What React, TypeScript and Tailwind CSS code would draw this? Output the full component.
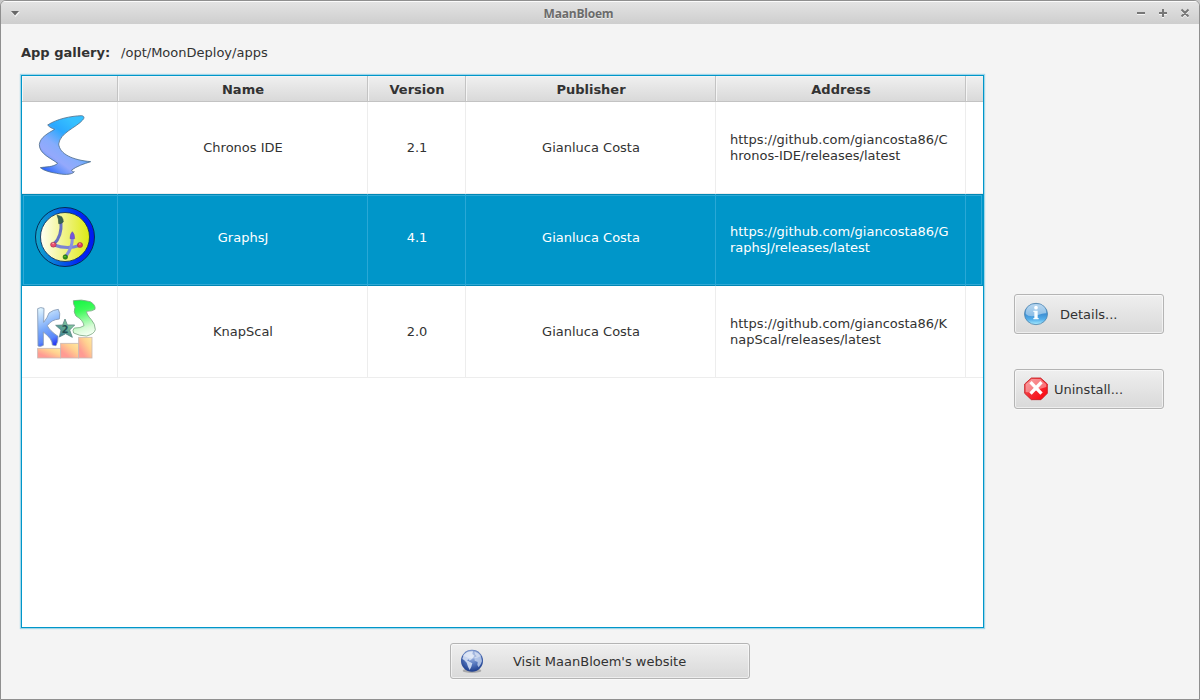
import type { ReactNode } from "react";

const BODY = "font-['DejaVu_Sans',sans-serif] text-[13px] leading-4 text-[#323232]";

function ChronosIcon() {
  return (
    <svg className="h-[92px] w-[95px]" viewBox="-6 -6 285 276">
      <defs>
        <linearGradient id="chronos" gradientUnits="userSpaceOnUse" x1="175" y1="75" x2="70" y2="215">
          <stop offset="0" stopColor="#35c0ff" />
          <stop offset="0.25" stopColor="#2ba8ff" />
          <stop offset="0.5" stopColor="#86acfc" />
          <stop offset="0.68" stopColor="#94a9fc" />
          <stop offset="0.8" stopColor="#6894fb" />
          <stop offset="1" stopColor="#1a55ff" />
        </linearGradient>
      </defs>
      <path
        d="M71 63 C98 45 140 36 173 35 C181 36 182 42 176 48 C158 70 108 86 104 120 C107 150 145 168 200 173 C180 179 158 187 143 198 C143 203 148 204 151 203 C143 214 115 212 98 208 C78 205 60 200 49 191 C65 188 88 190 101 178 C82 163 46 150 46 122 C48 100 72 88 92 76 C84 73 77 70 71 63 Z"
        fill="url(#chronos)"
        stroke="#52708d"
        strokeWidth="2.5"
      />
    </svg>
  );
}

function GraphsIcon() {
  return (
    <svg className="h-[92px] w-[95px]" viewBox="12 12 285 276">
      <defs>
        <linearGradient id="ring" x1="0" x2="1">
          <stop offset="0" stopColor="#13a9cb" />
          <stop offset="0.3" stopColor="#087adb" />
          <stop offset="0.72" stopColor="#0028f5" />
          <stop offset="1" stopColor="#0018f0" />
        </linearGradient>
        <linearGradient id="disc" x1="0" x2="1">
          <stop offset="0" stopColor="#fffff6" />
          <stop offset="0.5" stopColor="#f0f385" />
          <stop offset="1" stopColor="#dcea12" />
        </linearGradient>
      </defs>
      <circle cx="141" cy="141" r="88.500" fill="url(#ring)" stroke="#062c56" strokeWidth="3" />
      <circle cx="141" cy="141" r="73.500" fill="url(#disc)" stroke="#102b50" strokeWidth="2.500" />
      <g fill="none" strokeLinecap="round" strokeWidth="9">
        <path d="M129 95 C131 122 125 147 107 163" stroke="#6670c2" />
        <path d="M108 165 C132 174 160 175 186 166" stroke="#7c83d2" />
        <path d="M163 140 C164 164 155 184 143 199" stroke="#8a90dd" />
      </g>
      <path d="M117 75 L131 80 Q137 88 136 96 L128 101 L122 101 Q123 89 117 75Z" fill="#376350" stroke="#2a4a3b" strokeWidth="1.500" />
      <path d="M163 125 Q170 131 170 146 H156 Q156 131 163 125Z" fill="#7654db" stroke="#5a48b9" strokeWidth="1.500" />
      <ellipse cx="106" cy="164" rx="8.500" ry="7.500" fill="#e84d6d" stroke="#8c3048" strokeWidth="1.500" />
      <ellipse cx="186" cy="165" rx="8" ry="7.500" fill="#e23b5f" stroke="#8c3048" strokeWidth="1.500" />
      <path d="M103 161h5M183 162h5" stroke="#ffb4bd" strokeWidth="3" />
      <circle cx="142" cy="201" r="7" fill="#2b8e10" stroke="#1f5a18" strokeWidth="1.500" />
      <path d="M139 200h4" stroke="#78d751" strokeWidth="3" />
    </svg>
  );
}

function KnapIcon() {
  return (
    <svg className="h-[92px] w-[95px]" viewBox="-6 0 285 276">
      <defs>
        <linearGradient id="letterK" gradientUnits="userSpaceOnUse" x1="48" y1="68" x2="98" y2="178">
          <stop offset="0" stopColor="#dff5ff" />
          <stop offset="0.5" stopColor="#7aaaf9" />
          <stop offset="0.78" stopColor="#5a87fa" />
          <stop offset="1" stopColor="#1a24f4" />
        </linearGradient>
        <linearGradient id="letterS" x1="0.3" y1="0" x2="0.5" y2="1">
          <stop offset="0" stopColor="#18f545" />
          <stop offset="0.3" stopColor="#3cfa58" />
          <stop offset="0.8" stopColor="#d8fbd7" />
          <stop offset="1" stopColor="#f3fff1" />
        </linearGradient>
        <linearGradient id="star" x1="0" y1="1" x2="1" y2="0">
          <stop offset="0" stopColor="#2f729c" />
          <stop offset="0.5" stopColor="#62aa93" />
          <stop offset="1" stopColor="#a8ebac" />
        </linearGradient>
        <linearGradient id="step" x1="0" y1="1" x2="1" y2="0">
          <stop offset="0.25" stopColor="#ff9b93" />
          <stop offset="0.65" stopColor="#ffd190" />
          <stop offset="1" stopColor="#ffeaa0" />
        </linearGradient>
      </defs>
      <g fill="url(#step)" stroke="#c9b9b4" strokeWidth="2.500">
        <rect x="41" y="187" width="69" height="29" />
        <rect x="110" y="172" width="54" height="44" />
        <rect x="164" y="154" width="40" height="62" />
      </g>
      <path
        d="M41 68 Q50 62 60 67 L59 109 Q70 96 75 81 Q88 71 103 70 Q110 82 106 99 Q82 101 70 119 Q76 133 102 151 Q103 167 96 179 Q87 178 85 177 Q86 159 58 138 L58 178 Q50 183 42 180 Z"
        fill="url(#letterK)"
        stroke="#8497b2"
        strokeWidth="2.500"
      />
      <path
        d="M148 44 Q171 39 199 47 Q216 57 213 70 Q204 76 188 76 Q187 85 202 101 Q214 114 214 131 Q211 144 188 150 Q166 150 149 141 Q144 132 151 126 Q170 127 180 119 Q178 103 156 90 Q147 78 153 64 Q147 53 148 44Z"
        fill="url(#letterS)"
        stroke="#7ea886"
        strokeWidth="2.500"
      />
      <path
        d="M123 99 L130 117 L152 117 L137 132 L145 154 L125 143 L106 153 L111 132 L95 118 L116 117Z"
        fill="url(#star)"
        stroke="#5c8583"
        strokeWidth="2.500"
      />
      <text x="123" y="140" textAnchor="middle" className="font-['DejaVu_Sans',sans-serif] text-[29px] font-bold" fill="#245055">
        2
      </text>
    </svg>
  );
}

function InfoIcon() {
  return (
    <svg className="size-6 shrink-0" viewBox="0 0 72 72">
      <defs>
        <linearGradient id="info" x1="0" y1="0" x2="0" y2="1">
          <stop offset="0" stopColor="#5e9cd2" />
          <stop offset="0.5" stopColor="#3d8fd4" />
          <stop offset="0.75" stopColor="#54aeea" />
          <stop offset="1" stopColor="#a9edff" />
        </linearGradient>
        <linearGradient id="infoShine" x1="0" y1="0" x2="0" y2="1">
          <stop offset="0" stopColor="#b9d7ef" />
          <stop offset="1" stopColor="#8abde6" />
        </linearGradient>
      </defs>
      <ellipse cx="36" cy="36" rx="34.500" ry="32" fill="url(#info)" stroke="#5286ad" strokeWidth="2.500" />
      <path d="M5 36 C5 16 17 6 36 6 S67 16 67 34 C51 33 40 42 24 43 Q11 43 5 36Z" fill="url(#infoShine)" />
      <circle cx="36" cy="17" r="5.500" fill="#fff" />
      <path d="M28 26h13v22h3v4H28v-4h3V30h-3z" fill="#f8fdff" />
    </svg>
  );
}

function StopIcon() {
  return (
    <svg className="size-6 shrink-0" viewBox="0 0 72 72">
      <defs>
        <linearGradient id="stop" x1="0" y1="0" x2="1" y2="1">
          <stop offset="0" stopColor="#f46a6a" />
          <stop offset="0.5" stopColor="#f32c34" />
          <stop offset="1" stopColor="#ff0009" />
        </linearGradient>
      </defs>
      <path d="M22 3H50L70 21V49L51 68H22L2 49V21Z" fill="url(#stop)" stroke="#c31a21" strokeWidth="2.500" />
      <path d="M23 6H49L67 22V30Q48 34 34 42Q19 48 5 45V22Z" fill="#fff" opacity="0.38" />
      <path d="M23 19L49 46M49 19L23 46" stroke="#fff" strokeWidth="10" strokeLinecap="square" />
    </svg>
  );
}

function GlobeIcon() {
  return (
    <svg className="size-6 shrink-0" viewBox="0 0 72 72">
      <defs>
        <radialGradient id="globe" cx="0.5" cy="0.35" r="0.65">
          <stop offset="0" stopColor="#9eb5e3" />
          <stop offset="0.5" stopColor="#5476bd" />
          <stop offset="1" stopColor="#1d3d8c" />
        </radialGradient>
      </defs>
      <ellipse cx="36" cy="65" rx="28" ry="7" fill="#8d8d91" opacity="0.65" />
      <circle cx="36" cy="35" r="33" fill="url(#globe)" />
      <path d="M11 17Q22 6 39 7L37 15L43 20L36 30L29 35L26 31L21 34L30 39L37 43L34 53L29 63L24 53L20 41L13 34L7 30Z" fill="#dae5f7" opacity="0.85" />
      <path d="M43 8Q58 11 63 23L66 36Q63 47 56 55L52 48L53 39L44 35L43 26L50 22L45 16Z" fill="#c2d2ee" opacity="0.82" />
      <path d="M9 20Q20 3 37 4Q54 5 64 21Q40 36 9 20Z" fill="#fff" opacity="0.35" />
    </svg>
  );
}

interface AppRow {
  name: string;
  version: string;
  address: [string, string];
  icon: ReactNode;
  selected?: boolean;
  textPad: string;
}

const rows: AppRow[] = [
  { name: "Chronos IDE", version: "2.1", address: ["https://github.com/giancosta86/C", "hronos-IDE/releases/latest"], icon: <ChronosIcon />, textPad: "pt-[38px]" },
  { name: "GraphsJ", version: "4.1", address: ["https://github.com/giancosta86/G", "raphsJ/releases/latest"], icon: <GraphsIcon />, selected: true, textPad: "pt-[36px]" },
  { name: "KnapScal", version: "2.0", address: ["https://github.com/giancosta86/K", "napScal/releases/latest"], icon: <KnapIcon />, textPad: "pt-[38px]" },
];

const GRID = "grid grid-cols-[96px_250px_98px_250px_250px_1fr]";

function TableRow({ row }: { row: AppRow }) {
  const line = row.selected ? "border-[#29a8d6]" : "border-[#ededed]";
  const cell = `border-r pl-px text-center ${line} ${row.textPad}`;
  return (
    <div
      className={`${GRID} h-[92px] ${
        row.selected
          ? "bg-[#0096c9] text-white shadow-[inset_0_1px_#0087b5,inset_0_-1px_#0087b5,inset_1px_0_#0096c9,inset_-1px_0_#0096c9,inset_0_0_0_2px_#30a9d5]"
          : "border-b border-[#ededed]"
      }`}
    >
      <div className={`border-r ${line}`}>{row.icon}</div>
      <div className={cell}>{row.name}</div>
      <div className={cell}>{row.version}</div>
      <div className={cell}>Gianluca Costa</div>
      <div className={`whitespace-nowrap border-r pl-[14px] pt-[30px] ${line}`}>
        {row.address[0]}
        <br />
        {row.address[1]}
      </div>
      <div />
    </div>
  );
}

function PushButton({ className, children }: { className: string; children: ReactNode }) {
  return (
    <button
      className={`flex items-center rounded-[3px] border border-[#b4b4b4] bg-linear-to-b from-[#efefef] to-[#d9d9d9] shadow-[inset_0_0_0_1px_rgba(255,255,255,0.55),0_1px_#fafafa] ${className}`}
    >
      {children}
    </button>
  );
}

export default function App() {
  return (
    <div className="h-[700px] w-[1200px] bg-[#c8c8c8]">
      <div className={`flex h-full flex-col overflow-hidden rounded-t-[6px] border border-[#8f8f8f] bg-[#f4f4f4] ${BODY}`}>
        <header className="flex h-[23px] shrink-0 items-center bg-linear-to-b from-[#e4e4e4] to-[#cecece] shadow-[inset_0_1px_#fbfbfb]">
          <svg className="ml-[10px] mt-[2px] h-[7px] w-[9px]" viewBox="0 0 9 7">
            <path d="M0 2h9L4.500 7z" fill="#f5f5f5" />
            <path d="M0 1h8L4 5.500z" fill="#686868" />
          </svg>
          <h1 className="flex-1 pl-[2px] pt-0.5 text-center font-['Open_Sans',sans-serif] text-[12px] font-bold tracking-[-0.2px] text-[#6b6b6b] [text-shadow:0_1px_#f0f0f0]">
            MaanBloem
          </h1>
          <svg className="mr-[8px] h-[12px] w-[56px]" viewBox="0 0 56 12" fill="none" strokeWidth="2">
            <g stroke="#f5f5f5" transform="translate(0 1)">
              <path d="M2 6h8M24 6h8M28 2v8M46.500 2.500l7 7M53.500 2.500l-7 7" />
            </g>
            <path d="M2 6h8M24 6h8M28 2v8M46.500 2.500l7 7M53.500 2.500l-7 7" stroke="#777" />
          </svg>
        </header>
        <div className="flex h-[51px] shrink-0 items-center pb-px pl-[20px] pt-[7px]">
          <span className="font-bold">App gallery:</span>
          <span className="ml-[11px]">/opt/MoonDeploy/apps</span>
        </div>
        <main className="flex">
          <section className="ml-[20px] h-[553px] w-[963px] border border-[#0096c9] bg-white shadow-[0_0_1px_1px_rgba(3,158,211,0.35)]">
            <div className={`${GRID} h-[26px] border-b border-[#c3c3c3] bg-linear-to-b from-[#f0f0f0] to-[#d9d9d9] text-center font-bold`}>
              {["", "Name", "Version", "Publisher", "Address"].map((title) => (
                <div key={title} className="border-r border-[#c3c3c3] pl-px pt-[6px] leading-4 shadow-[inset_1px_1px_#f5f5f5]">
                  {title}
                </div>
              ))}
              <div className="shadow-[inset_1px_1px_#f5f5f5]" />
            </div>
            {rows.map((row) => (
              <TableRow key={row.name} row={row} />
            ))}
          </section>
          <aside className="ml-[30px] flex flex-col gap-[35px] pt-[219px]">
            <PushButton className="h-[40px] w-[150px] pl-[9px]">
              <InfoIcon />
              <span className="ml-[12px] pt-[2px]">Details...</span>
            </PushButton>
            <PushButton className="h-[40px] w-[150px] pl-[9px]">
              <StopIcon />
              <span className="ml-[6px] pt-[2px]">Uninstall...</span>
            </PushButton>
          </aside>
        </main>
        <footer className="flex justify-center pt-[15px]">
          <PushButton className="h-[36px] w-[300px] pl-[9px]">
            <GlobeIcon />
            <span className="ml-[29px] pt-[2px]">Visit MaanBloem's website</span>
          </PushButton>
        </footer>
      </div>
    </div>
  );
}
